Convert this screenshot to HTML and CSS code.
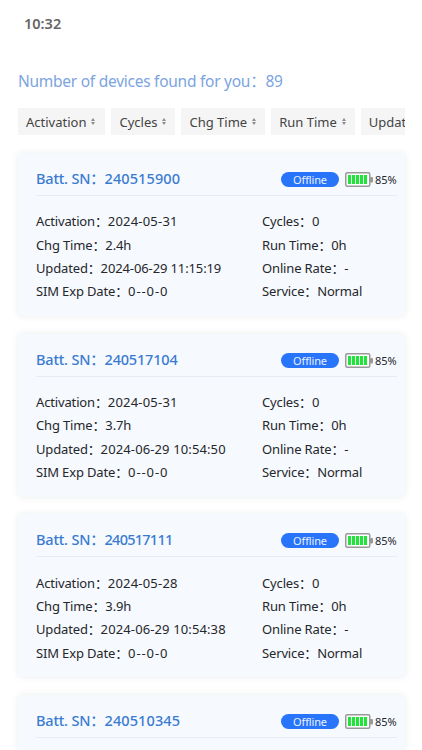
FILE: index.html
```html
<!DOCTYPE html>
<html lang="en">
<head>
    <meta charset="UTF-8">
    <meta name="viewport" content="width=device-width, initial-scale=1.0">
    <title>Battery Devices</title>
    <link rel="stylesheet" href="styles.css">
</head>
<body>

    <!-- Status bar -->
    <div class="status-bar">10:32</div>

    <h1 class="found">Number of devices found for you：<span class="count">89</span></h1>

    <!-- Sort tabs -->
    <div class="tabs">
        <div class="tab"><span>Activation</span><i class="sort"></i></div>
        <div class="tab"><span>Cycles</span><i class="sort"></i></div>
        <div class="tab"><span>Chg Time</span><i class="sort"></i></div>
        <div class="tab"><span>Run Time</span><i class="sort"></i></div>
        <div class="tab"><span>Updat</span></div>
    </div>

    <!-- Device list, filled by script.js -->
    <div class="list" id="list"></div>

    <script src="script.js"></script>
</body>
</html>
```

FILE: styles.css
```css
* {
    box-sizing: border-box;
}

body {
    font-family: "Noto Sans", "Noto Sans CJK SC", sans-serif;
    margin: 0;
    height: 750px;
    padding: 0 17px 0 18px;
    background-color: #fff;
    color: #25272b;
    font-size: 13px;
    overflow: hidden;
}

.status-bar {
    height: 46px;
    padding-left: 6px;
    line-height: 46px;
    font-size: 14.5px;
    font-weight: 600;
    color: #666;
}

.found {
    margin: 23px 0 14px;
    height: 25px;
    line-height: 25px;
    font-size: 15.5px;
    font-weight: 400;
    letter-spacing: -0.26px;
    color: #7ba4e0;
    white-space: nowrap;
}

/* Sort tabs */
.tabs {
    display: flex;
    gap: 6px;
    overflow: hidden;
}

.tab {
    flex: none;
    display: flex;
    align-items: center;
    gap: 5px;
    height: 27px;
    padding: 0 9px 0 8px;
    background-color: #f5f5f5;
    color: #444;
    white-space: nowrap;
}

.tab:first-child {
    padding-right: 10px;
}

/* Last tab runs up to the edge of the row */
.tab:last-child {
    flex: 1;
    padding-right: 0;
}

.sort::before,
.sort::after {
    content: "";
    display: block;
    border-left: 2.5px solid transparent;
    border-right: 2.5px solid transparent;
}

.sort::before {
    border-bottom: 3.5px solid #8c8c8c;
    margin-bottom: 1px;
}

.sort::after {
    border-top: 3.5px solid #8c8c8c;
}

/* Device cards */
.list {
    display: flex;
    flex-direction: column;
    gap: 17.7px;
    height: 597px;
    margin-top: 18px;
}

.card {
    flex: none;
    height: 163px;
    padding: 9px 8px 0 18px;
    border-radius: 4px;
    background-color: #f6f9fe;
    box-shadow: 0 0 6px rgba(60, 70, 90, 0.1);
}

/* Only the head of the last card is in view */
.card:last-child {
    flex: 1;
    height: auto;
    border-radius: 4px 4px 0 0;
}

.card-head {
    display: flex;
    align-items: center;
    height: 34px;
    border-bottom: 1px solid #e9edf3;
}

.title {
    flex: 1;
    padding-bottom: 2px;
    font-size: 14.5px;
    font-weight: 500;
    letter-spacing: -0.2px;
    color: #3a7bd2;
    white-space: nowrap;
}

.badge {
    width: 58px;
    height: 15px;
    margin: 2px 6px 0 0;
    border-radius: 8px;
    background-color: #2874fb;
    color: #e9f1ff;
    font-size: 11px;
    line-height: 15px;
    letter-spacing: -0.15px;
    text-align: center;
}

.battery {
    display: block;
    width: 28px;
    height: 15px;
    margin: 2px 2px 0 0;
}

.percent {
    width: 22px;
    margin-top: 2px;
    font-size: 11px;
    letter-spacing: -0.1px;
    white-space: nowrap;
}

.info {
    display: grid;
    grid-template-columns: 226px 1fr;
    grid-auto-rows: 23.4px;
    align-items: center;
    margin-top: 13px;
    letter-spacing: -0.15px;
    white-space: nowrap;
}

.date {
    letter-spacing: 0.2px;
}

.sim {
    letter-spacing: 0.9px;
}
```

FILE: script.js
```js
const devices = [
    { sn: '240515900', activation: '2024-05-31', chg: '2.4h', updated: '2024-06-29 11:15:19' },
    { sn: '240517104', activation: '2024-05-31', chg: '3.7h', updated: '2024-06-29 10:54:50' },
    { sn: '240517111', activation: '2024-05-28', chg: '3.9h', updated: '2024-06-29 10:54:38' },
    { sn: '240510345' }
];

const battery = `
    <svg class="battery" viewBox="0 0 28 15">
        <rect x="0.75" y="0.75" width="24" height="13.5" rx="1.5" fill="#fff" stroke="#999" stroke-width="1.5"/>
        <rect x="25" y="5" width="3" height="5.5" rx="1" fill="#999"/>
        <path d="M4.5 3v9M8.5 3v9M12.5 3v9M16.5 3v9M20.5 3v9" stroke="#22e33c" stroke-width="3.1"/>
    </svg>`;

// strings with many narrow 1s are set a little tighter
function spacing(text, base, step) {
    const ones = text.split('1').length - 1;
    return `letter-spacing: ${(base - (ones - 1) * step).toFixed(2)}px`;
}

function field(label, value, cls = 'value', style = '') {
    return `<div class="field">${label}：<span class="${cls}" style="${style}">${value}</span></div>`;
}

function info(d) {
    return `
        <div class="info">
            ${field('Activation', d.activation, 'date')}
            ${field('Cycles', '0')}
            ${field('Chg Time', d.chg)}
            ${field('Run Time', '0h')}
            ${field('Updated', d.updated, 'datetime', spacing(d.updated, 0.12, 0.08))}
            ${field('Online Rate', '-')}
            ${field('SIM Exp Date', '0--0-0', 'sim')}
            ${field('Service', 'Normal')}
        </div>`;
}

document.getElementById('list').innerHTML = devices.map(d => `
    <div class="card">
        <div class="card-head">
            <div class="title">Batt. SN：<span class="sn" style="${spacing(d.sn, 0.1, 0.28)}">${d.sn}</span></div>
            <div class="badge">Offline</div>
            ${battery}
            <div class="percent">85%</div>
        </div>
        ${d.activation ? info(d) : ''}
    </div>`).join('');
```
